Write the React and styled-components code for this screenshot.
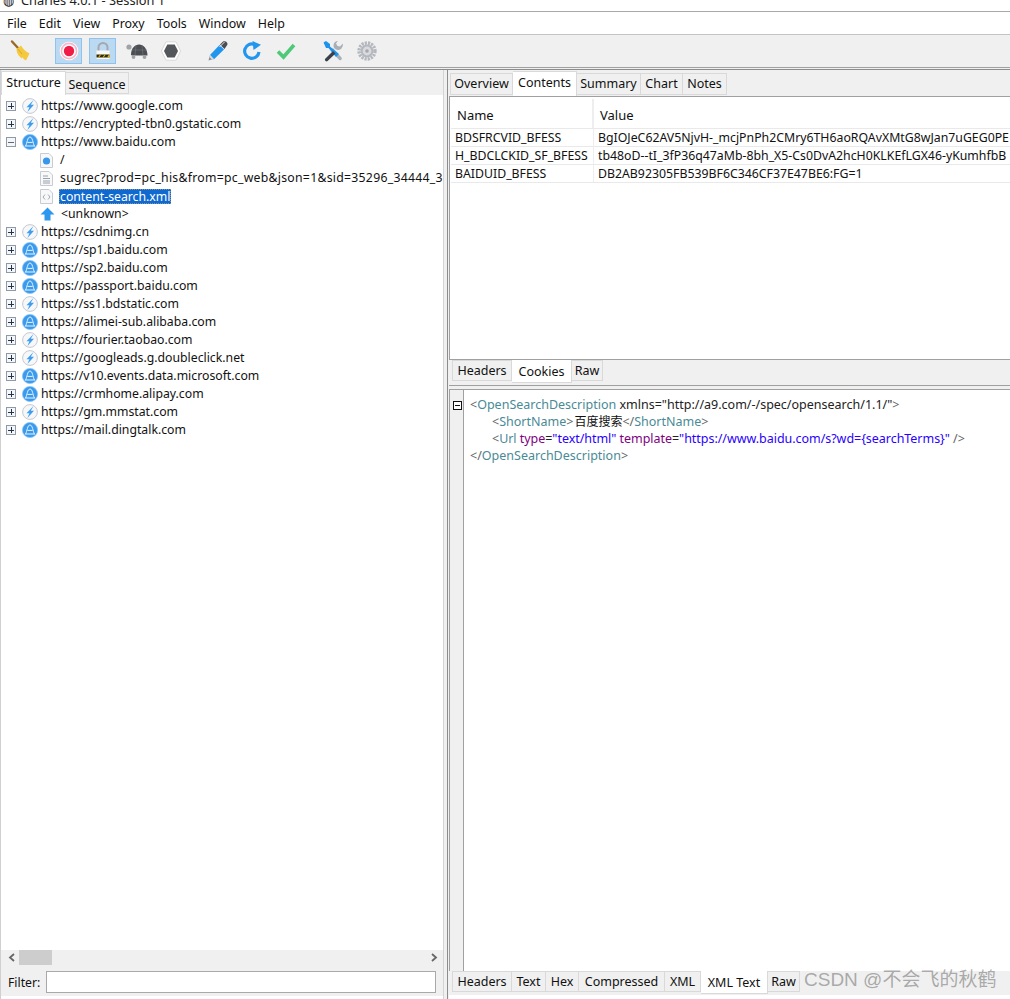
import React from "react";
import styled, { createGlobalStyle } from "styled-components";

const Global = createGlobalStyle`
  html, body { margin: 0; padding: 0; background: #fff; }
  body { font-family: "Noto Sans", "Noto Sans CJK SC", sans-serif; font-size: 12.25px; color: #111; overflow: hidden; }
  #root { width: 1010px; height: 999px; overflow: hidden; }
`;

const Window = styled.div`
  width: 1010px; height: 999px; display: flex; flex-direction: column; position: relative; overflow: hidden; background: #fff;
`;
const TitleBar = styled.div`
  height: 11px; flex: none; overflow: hidden; display: flex; gap: 7px; padding-left: 3px; background: #fff; border-bottom: 1px solid #a8a8a8;
`;
const TitleText = styled.span`
  margin-top: -9px; line-height: 18px; font-size: 12.8px; color: #222;
`;
const MenuBar = styled.div`
  height: 22px; flex: none; display: flex; align-items: center; gap: 12px; padding-left: 7px; background: #fff; border-bottom: 1px solid #c4c4c4; font-size: 12.4px;
`;
const Toolbar = styled.div`
  height: 32px; flex: none; display: flex; align-items: center; background: #f0f0f0; padding-left: 9px; border-bottom: 1px solid #a0a0a0;
`;
const ToolSlot = styled.div`
  width: ${p => p.$w || 27}px; height: 26px; flex: none; margin-left: ${p => p.$ml || 0}px; display: flex; align-items: center; justify-content: center; box-sizing: border-box;
  ${p => p.$on && "background:#bcd9f2;border:1px solid #8fc3ef;"}
`;
const Rule = styled.div`
  height: 1px; flex: none; background: #f0f0f0; border-bottom: 1px solid #8c8c8c;
`;
const Main = styled.div`
  flex: 1; display: flex; min-height: 0; background: #f0f0f0;
`;
const LeftPane = styled.div`
  width: 442px; flex: none; display: flex; flex-direction: column; border-left: 1px solid #d0d0d0;
`;
const Splitter = styled.div`
  width: 3px; flex: none; background: #f0f0f0; border-left: 1px solid #d4d4d4; border-right: 1px solid #8c8c8c;
`;
const RightPane = styled.div`
  flex: 1; min-width: 0; display: flex; flex-direction: column; padding-left: 1px; overflow: hidden;
`;
const TabRow = styled.div`
  height: ${p => p.$h || 24}px; flex: none; display: flex; align-items: flex-end; padding-left: ${p => p.$pl || 0}px; background: #f0f0f0;
`;
const Tab = styled.div`
  width: ${p => p.$w}px; flex: none; box-sizing: border-box; text-align: center; font-size: 12.5px; white-space: nowrap;
  border: 1px solid #d9d9d9; border-left-width: ${p => p.$first ? 1 : 0}px;
  ${p => p.$active
    ? `height: ${p.$tall ? 25 : 24}px; background: #fff; line-height: 21px; border-bottom: 0;`
    : `height: 22px; background: #f0f0f0; margin-bottom: 1px; line-height: ${p.$low ? 23 : 20}px;`}
`;
const Tree = styled.div`
  flex: 1; min-height: 0; background: #fff; padding-top: 2px; overflow: hidden;
`;
const Row = styled.div`
  height: 18px; display: flex; align-items: center; white-space: nowrap; position: relative; overflow: hidden; padding-left: ${p => p.$indent ? 39 : 5}px;
  & > svg { flex: none; }
`;
const Toggle = styled.span`
  width: 8px; height: 8px; flex: none; border: 1px solid #8f9aa8; margin-right: 6px; position: relative; background: #f4f6f8;
  &::before { content: ""; position: absolute; left: 1px; right: 1px; top: 3.5px; height: 1px; background: ${p => p.$plus ? "#27334a" : "#667"}; }
  ${p => p.$plus && `&::after { content: ""; position: absolute; top: 1px; bottom: 1px; left: 3.5px; width: 1px; background: #27334a; }`}
`;
const RowLabel = styled.span`
  margin-left: ${p => p.$ml ?? 4}px; line-height: 18px;
  ${p => p.$track && "letter-spacing: .27px;"}
  ${p => p.$sel && "background:#0f69cf;color:#fff;outline:1px dotted rgba(235,190,110,.5);outline-offset:-1px;padding:0 1px;line-height:15px;"}
`;
const ScrollBar = styled.div`
  height: 15px; flex: none; display: flex; align-items: center; background: #f0f0f0; color: #555;
`;
const ScrollThumb = styled.div`
  width: 33px; height: 15px; background: #cdcdcd; margin-left: 2px;
`;
const ScrollEnd = styled.div`
  width: 12px; flex: none; display: flex; justify-content: center; margin-left: ${p => p.$auto ? "auto" : 0};
  margin-right: ${p => p.$auto ? 3 : 0}px; padding-left: ${p => p.$auto ? 0 : 4}px;
`;
const FilterRow = styled.div`
  height: 31px; box-sizing: border-box; flex: none; display: flex; align-items: center; padding: 3px 7px 0 7px; gap: 6px; background: #f0f0f0;
`;
const FilterInput = styled.div`
  flex: 1; height: 22px; box-sizing: border-box; background: #fff; border: 1px solid #a9a9a9;
`;
const BottomGap = styled.div`
  height: ${p => p.$h || 3}px; flex: none; background: #fff;
`;
const ContentsBox = styled.div`
  flex: none; height: 260px; border: 1px solid #a0a0a0; border-right: 0; background: #fff; padding: 2px 0 0 1px; overflow: hidden;
`;
const TableRow = styled.div`
  display: flex; height: ${p => p.$h || 18}px; box-sizing: border-box; border-bottom: 1px solid #e9e9e9; align-items: center; white-space: nowrap; font-size: 12.3px;
`;
const HeadCell = styled.div`
  width: ${p => p.$w ? `${p.$w}px` : "auto"}; flex: ${p => p.$w ? "none" : 1}; height: 100%; display: flex; align-items: center; padding: 2px 0 0 6px; box-sizing: border-box; font-size: 13px;
  ${p => p.$w && "border-right: 2px solid #eeeeee;"}
`;
const Cell = styled.div`
  width: ${p => p.$w ? `${p.$w}px` : "auto"}; flex: ${p => p.$w ? "none" : 1}; height: 100%; line-height: 17px; padding-left: 4px; box-sizing: border-box; overflow: hidden;
  ${p => p.$w && "border-right: 1px solid #eeeeee;"}
`;
const SubTabs = styled.div`
  height: 25px; flex: none; display: flex; padding-left: 3px; background: #f0f0f0; border-bottom: 1px solid #a0a0a0; align-items: flex-start;
`;
const SubTab = styled.div`
  width: ${p => p.$w}px; box-sizing: border-box; flex: none; text-align: center; white-space: nowrap; font-size: 12.5px;
  border: 1px solid #d9d9d9; border-left-width: ${p => p.$first ? 1 : 0}px;
  ${p => p.$active ? "height: 23px; background:#fff; line-height: 24px; border-top: 0;" : "height: 21px; line-height: 19px;"}
`;
const Editor = styled.div`
  flex: 1; min-height: 0; margin-top: 3px; display: flex; background: #fff; border-top: 1px solid #a0a0a0; border-left: 1px solid #a0a0a0;
`;
const Gutter = styled.div`
  width: 13px; flex: none; background: #f0f0f0; border-right: 1px solid #a0a0a0; position: relative;
`;
const Fold = styled.span`
  position: absolute; left: 3px; top: 11px; width: 7px; height: 7px; border: 1px solid #111; background: #fff;
  &::before { content: ""; position: absolute; left: 1px; right: 1px; top: 3px; height: 1px; background: #111; }
`;
const Code = styled.div`
  padding: 6px 0 0 6px; font-size: 12.5px; white-space: nowrap; overflow: hidden;
`;
const CodeLine = styled.div`
  height: 17px; line-height: 17px; padding-left: ${p => p.$indent ? 22 : 0}px;
  ${p => p.$tight && "letter-spacing: -.04px;"}
`;
const Br = styled.span`color: #666;`;
const Tag = styled.span`color: #4a8a96;`;
const Attr = styled.span`color: #7f007f;`;
const Str = styled.span`color: #2a00ff;`;
const Ink = styled.span`color: #222;`;
const Cjk = styled.span`color: #111; font-size: 12px; margin-left: 1px;`;
const BottomTabs = styled.div`
  height: 24px; flex: none; display: flex; padding-left: 3px; background: #f0f0f0; align-items: flex-start;
`;
const Watermark = styled.div`
  position: absolute; left: 804px; top: 967px; font-size: 19px; line-height: 26px; color: rgba(100,100,100,.52); white-space: nowrap; font-family: "Liberation Sans", "Noto Sans CJK SC", sans-serif;
`;

const Broom = () => (
  <svg width="22" height="24" viewBox="0 0 22 24">
    <path d="M2 2.5 L8 9" stroke="#9a6b28" strokeWidth="2.4" strokeLinecap="round" />
    <path d="M6.5 10 L11 6.5 C13 10 16 13 19.5 14.5 L16 21.5 C14 20.5 13 19.5 12.5 18 L12 19.5 C9 17.5 6.5 14 6.5 10Z" fill="#f4c93e" />
    <path d="M8 10 L12 15" stroke="#dca828" strokeWidth="1" />
  </svg>
);
const Record = () => (
  <svg width="20" height="20" viewBox="0 0 20 20">
    <circle cx="10" cy="10" r="9.3" fill="#fff" />
    <circle cx="10" cy="10" r="8.4" fill="#f8b6c4" />
    <circle cx="10" cy="10" r="6.8" fill="#fff" />
    <circle cx="10" cy="10" r="5.2" fill="#ee1c47" />
  </svg>
);
const Lock = () => (
  <svg width="20" height="20" viewBox="0 0 20 20">
    <path d="M5.5 10 V6.5 a4.5 4.5 0 0 1 9 0 V10" fill="none" stroke="#a4a8ad" strokeWidth="2" />
    <rect x="3.5" y="9.5" width="13" height="8.5" fill="#f8f8f8" />
    <rect x="3.5" y="13.5" width="13" height="3" fill="#2f2a12" />
    <path d="M5 16.5 L7 13.5 H8.2 L6.2 16.5Z M9.5 16.5 L11.5 13.5 H12.7 L10.7 16.5Z M14 16.5 L16 13.5 H16.5 V16.5Z" fill="#e6b800" />
  </svg>
);
const Turtle = () => (
  <svg width="22" height="18" viewBox="0 0 22 18">
    <circle cx="3" cy="5" r="2.6" fill="#9ea3a8" />
    <path d="M4.6 7 L7 11 L5 8Z" fill="#9ea3a8" />
    <path d="M5 13 C5 6 9 2.5 13 2.5 C17.5 2.5 21.5 7 21.5 13.5 H6Z" fill="#4a4d52" />
    <path d="M10 3.5 L9 13 M16 3.5 L17 13 M6 8 H20.5" stroke="#6f7276" strokeWidth=".7" />
    <circle cx="7.5" cy="15" r="1.9" fill="#9ea3a8" />
    <circle cx="18.5" cy="15" r="1.9" fill="#9ea3a8" />
  </svg>
);
const Hexagon = () => (
  <svg width="20" height="20" viewBox="0 0 20 20">
    <path d="M5 .8 H15 L19.6 10 L15 19.2 H5 L.4 10Z" fill="#fff" stroke="#d8d8d8" />
    <path d="M6.3 3.4 H13.7 L17 10 L13.7 16.6 H6.3 L3 10Z" fill="#53565b" />
  </svg>
);
const Pen = () => (
  <svg width="22" height="22" viewBox="0 0 22 22">
    <path d="M1.5 20.5 L2.8 15.5 L6.5 19 Z" fill="#8c9096" />
    <path d="M3 15 L12.5 5 L17 9.5 L7 19.2Z" fill="#2196ef" />
    <path d="M3 15 L7 19.2 L5.5 20 L2.4 17Z" fill="#d7dade" />
    <path d="M13 4.5 L15.5 2 a2.6 2.6 0 0 1 4 4 L17.5 9Z" fill="#4a4d55" />
    <path d="M12.5 7 L18 1.5" stroke="#e8e8e8" strokeWidth="1" />
  </svg>
);
const Refresh = () => (
  <svg width="20" height="20" viewBox="0 0 20 20">
    <path d="M17 11 A7.2 7.2 0 1 1 12.5 3.4" fill="none" stroke="#2196ef" strokeWidth="3.2" />
    <path d="M10.5 0 L19 3.8 L11.5 9Z" fill="#2196ef" />
  </svg>
);
const Check = () => (
  <svg width="20" height="18" viewBox="0 0 20 18">
    <path d="M2 9.5 L7.5 15 L18 3" fill="none" stroke="#4fc878" strokeWidth="3.6" />
  </svg>
);
const Tools = () => (
  <svg width="22" height="22" viewBox="0 0 22 22">
    <path d="M11 8 L19.5 17.5 a1.7 1.7 0 0 1 -2.8 2 L8.5 10.5Z" fill="#aab0b8" />
    <path d="M14 9.5 A4.5 4.5 0 0 1 15.8 1 L14 3.5 L15.5 6 L18 6.5 L20.8 3.6 A5 5 0 0 1 14 9.5Z" fill="#a9afb7" />
    <path d="M1.5 2.5 L4 1 L8 4 L8 6.5 L17 14 L14 17 L6.5 8 L4 8Z" fill="#1e93ee" />
    <path d="M11 11 L3 19 a1.7 1.7 0 0 0 2.6 2 L13.5 13.5Z" fill="#3c4048" />
  </svg>
);
const Gear = () => (
  <svg width="20" height="20" viewBox="0 0 20 20">
    <circle cx="10" cy="10" r="8" fill="none" stroke="#b4b8be" strokeWidth="3.4" strokeDasharray="2.2 1" />
    <circle cx="10" cy="10" r="6.4" fill="#b4b8be" />
    <circle cx="10" cy="10" r="4.4" fill="#d8dadd" />
    <circle cx="10" cy="10" r="1.8" fill="#a4a8ae" />
  </svg>
);
const Bolt = () => (
  <svg width="16" height="16" viewBox="0 0 16 16">
    <circle cx="8" cy="8" r="7.4" fill="#f6f7f9" stroke="#c6cad0" />
    <path d="M11.5 2 L4.5 9.2 H7.4 L5.4 14 L12 6.8 H8.8Z" fill="#3f9df0" />
  </svg>
);
const Globe = () => (
  <svg width="16" height="16" viewBox="0 0 16 16">
    <circle cx="8" cy="8" r="7.6" fill="#3a9bee" stroke="#8cc4f2" strokeWidth=".8" />
    <path d="M3 12 H13 M3.6 12 C5.2 9 5.4 3 8 3 C10.6 3 10.8 9 12.4 12 M5.4 8.4 H10.6" fill="none" stroke="#e8f3fd" strokeWidth="1" />
  </svg>
);
const Doc = ({ children }) => (
  <svg width="13" height="15" viewBox="0 0 13 15">
    <path d="M.5 .5 H9 L12.5 4 V14.5 H.5Z" fill="#f7f8fa" stroke="#c8ccd2" />
    {children}
  </svg>
);
const DocDot = () => <Doc><circle cx="6.5" cy="8" r="3.6" fill="#3a97e8" /></Doc>;
const DocLines = () => <Doc><path d="M3 5 H8 M3 7.5 H10 M3 10 H10 M3 12 H10" stroke="#9aa0a8" /></Doc>;
const DocXml = () => <Doc><path d="M5 5.5 L3 8 L5 10.5 M8 5.5 L10 8 L8 10.5" stroke="#a4a8ae" fill="none" /></Doc>;
const ArrowUp = () => (
  <svg width="15" height="14" viewBox="0 0 15 14">
    <path d="M7.5 .5 L14.5 7.5 H10.5 V13.5 H4.5 V7.5 H.5Z" fill="#2b97ee" />
  </svg>
);
const ArrowGlyph = ({ right }) => (
  <svg width="7" height="9" viewBox="0 0 7 9">
    <path d={right ? "M1 1 L5 4.5 L1 8" : "M6 1 L2 4.5 L6 8"} fill="none" stroke="#666" strokeWidth="1.8" />
  </svg>
);

const hosts = [
  ["https://csdnimg.cn", "b"], ["https://sp1.baidu.com", "g"], ["https://sp2.baidu.com", "g"],
  ["https://passport.baidu.com", "g"], ["https://ss1.bdstatic.com", "b"], ["https://alimei-sub.alibaba.com", "g"],
  ["https://fourier.taobao.com", "b"], ["https://googleads.g.doubleclick.net", "b"], ["https://v10.events.data.microsoft.com", "g"],
  ["https://crmhome.alipay.com", "g"], ["https://gm.mmstat.com", "b"], ["https://mail.dingtalk.com", "g"],
];

const Host = ({ url, kind, open }) => (
  <Row>
    <Toggle $plus={!open} />
    {kind === "b" ? <Bolt /> : <Globe />}
    <RowLabel $ml={3}>{url}</RowLabel>
  </Row>
);
const Leaf = ({ icon, label, sel, ml, track }) => (
  <Row $indent>
    {icon}
    <RowLabel $sel={sel} $ml={ml} $track={track}>{label}</RowLabel>
  </Row>
);

export default function App() {
  return (
    <Window>
      <Global />
      <TitleBar>
        <TitleText>◍</TitleText>
        <TitleText>Charles 4.0.1 - Session 1</TitleText>
      </TitleBar>
      <MenuBar>
        <span>File</span><span>Edit</span><span>View</span><span>Proxy</span><span>Tools</span><span>Window</span><span>Help</span>
      </MenuBar>
      <Toolbar>
        <ToolSlot $w={24}><Broom /></ToolSlot>
        <ToolSlot $on $ml={22}><Record /></ToolSlot>
        <ToolSlot $on $ml={7}><Lock /></ToolSlot>
        <ToolSlot $ml={7}><Turtle /></ToolSlot>
        <ToolSlot $ml={7}><Hexagon /></ToolSlot>
        <ToolSlot $ml={20}><Pen /></ToolSlot>
        <ToolSlot $ml={7}><Refresh /></ToolSlot>
        <ToolSlot $ml={7}><Check /></ToolSlot>
        <ToolSlot $ml={20}><Tools /></ToolSlot>
        <ToolSlot $ml={7}><Gear /></ToolSlot>
      </Toolbar>
      <Rule />
      <Main>
        <LeftPane>
          <TabRow $h={25}>
            <Tab $w={65} $first $active>Structure</Tab>
            <Tab $w={63} $low>Sequence</Tab>
          </TabRow>
          <Tree>
            <Host url="https://www.google.com" kind="b" />
            <Host url="https://encrypted-tbn0.gstatic.com" kind="b" />
            <Host url="https://www.baidu.com" kind="g" open />
            <Leaf icon={<DocDot />} label="/" ml={7} />
            <Leaf icon={<DocLines />} label="sugrec?prod=pc_his&from=pc_web&json=1&sid=35296_34444_3" ml={7} track />
            <Leaf icon={<DocXml />} label="content-search.xml" sel ml={6} />
            <Leaf icon={<ArrowUp />} label="<unknown>" ml={6} />
            {hosts.map(([u, k]) => <Host key={u} url={u} kind={k} />)}
          </Tree>
          <ScrollBar>
            <ScrollEnd><ArrowGlyph /></ScrollEnd>
            <ScrollThumb />
            <ScrollEnd $auto><ArrowGlyph right /></ScrollEnd>
          </ScrollBar>
          <FilterRow>
            <span>Filter:</span>
            <FilterInput />
          </FilterRow>
          <BottomGap />
        </LeftPane>
        <Splitter />
        <RightPane>
          <TabRow $h={26} $pl={1}>
            <Tab $w={63} $first>Overview</Tab>
            <Tab $w={64} $active $tall>Contents</Tab>
            <Tab $w={64}>Summary</Tab>
            <Tab $w={42}>Chart</Tab>
            <Tab $w={44}>Notes</Tab>
          </TabRow>
          <ContentsBox>
            <TableRow $h={30}>
              <HeadCell $w={143}>Name</HeadCell>
              <HeadCell>Value</HeadCell>
            </TableRow>
            <TableRow>
              <Cell $w={143}>BDSFRCVID_BFESS</Cell>
              <Cell>BgIOJeC62AV5NjvH-_mcjPnPh2CMry6TH6aoRQAvXMtG8wJan7uGEG0PE</Cell>
            </TableRow>
            <TableRow>
              <Cell $w={143}>H_BDCLCKID_SF_BFESS</Cell>
              <Cell>tb48oD--tI_3fP36q47aMb-8bh_X5-Cs0DvA2hcH0KLKEfLGX46-yKumhfbB</Cell>
            </TableRow>
            <TableRow>
              <Cell $w={143}>BAIDUID_BFESS</Cell>
              <Cell>DB2AB92305FB539BF6C346CF37E47BE6:FG=1</Cell>
            </TableRow>
          </ContentsBox>
          <SubTabs>
            <SubTab $w={60} $first>Headers</SubTab>
            <SubTab $w={60} $active>Cookies</SubTab>
            <SubTab $w={31}>Raw</SubTab>
          </SubTabs>
          <Editor>
            <Gutter><Fold /></Gutter>
            <Code>
              <CodeLine><Br>&lt;</Br><Tag>OpenSearchDescription</Tag> <Ink>xmlns="http://a9.com/-/spec/opensearch/1.1/"</Ink><Br>&gt;</Br></CodeLine>
              <CodeLine $indent><Br>&lt;</Br><Tag>ShortName</Tag><Br>&gt;</Br><Cjk>百度搜索</Cjk><Br>&lt;/</Br><Tag>ShortName</Tag><Br>&gt;</Br></CodeLine>
              <CodeLine $indent $tight><Br>&lt;</Br><Tag>Url</Tag> <Attr>type</Attr><Ink>=</Ink><Str>"text/html"</Str> <Attr>template</Attr><Ink>=</Ink><Str>"https://www.baidu.com/s?wd={"{searchTerms}"}"</Str> <Br>/&gt;</Br></CodeLine>
              <CodeLine><Br>&lt;/</Br><Tag>OpenSearchDescription</Tag><Br>&gt;</Br></CodeLine>
            </Code>
          </Editor>
          <BottomTabs>
            <SubTab $w={60} $first>Headers</SubTab>
            <SubTab $w={34}>Text</SubTab>
            <SubTab $w={33}>Hex</SubTab>
            <SubTab $w={86}>Compressed</SubTab>
            <SubTab $w={36}>XML</SubTab>
            <SubTab $w={67} $active>XML Text</SubTab>
            <SubTab $w={32}>Raw</SubTab>
          </BottomTabs>
          <BottomGap $h={4} />
        </RightPane>
      </Main>
      <Watermark>CSDN @不会飞的秋鹤</Watermark>
    </Window>
  );
}
